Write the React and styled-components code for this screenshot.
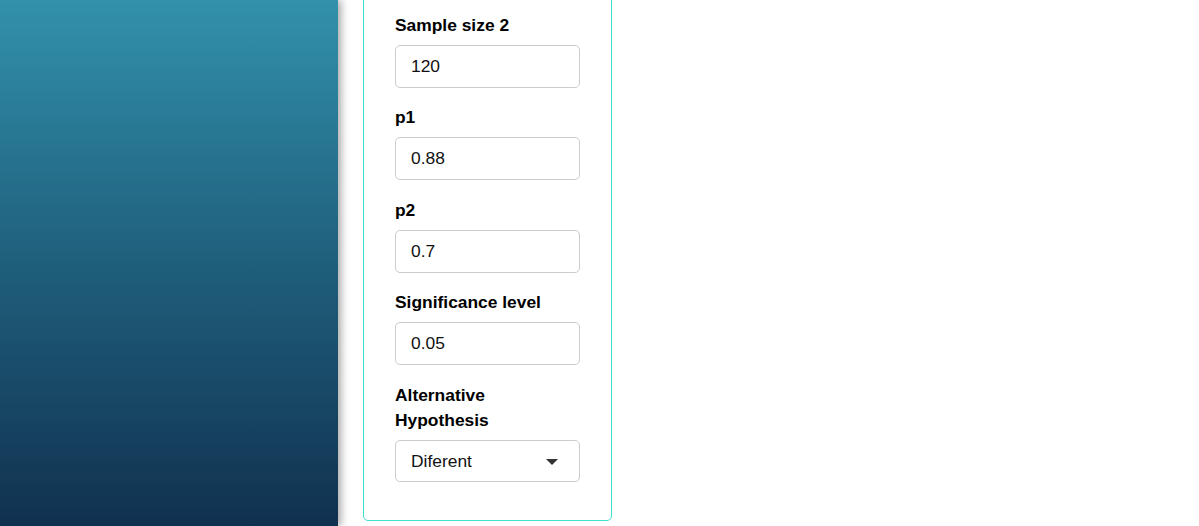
import React, { useState } from "react"
import styled, { createGlobalStyle } from "styled-components"

const GlobalStyle = createGlobalStyle`
  html, body {
    margin: 0;
    padding: 0;
    height: 100%;
    overflow: hidden;
    background: #fff;
    font-family: "Liberation Sans", Arial, sans-serif;
  }
`

const fields = [
  { name: "n2", label: "Sample size 2", value: "120" },
  { name: "p1", label: "p1", value: "0.88" },
  { name: "p2", label: "p2", value: "0.7" },
  { name: "alpha", label: "Significance level", value: "0.05" },
]

const App = () => {
  const [formData, setFormData] = useState(
    Object.fromEntries(fields.map((f) => [f.name, f.value]))
  )
  const [alternative, setAlternative] = useState("two.sided")

  const onChange = (e) => {
    setFormData((prev) => ({ ...prev, [e.target.name]: e.target.value }))
  }

  return (
    <Wrapper>
      <GlobalStyle />
      <Sidebar />
      <Main>
        <Card>
          {fields.map((f) => (
            <Group key={f.name}>
              <Label htmlFor={f.name}>{f.label}</Label>
              <Input
                type="text"
                id={f.name}
                name={f.name}
                value={formData[f.name]}
                onChange={onChange}
              />
            </Group>
          ))}
          <Group>
            <Label htmlFor="alternative">Alternative Hypothesis</Label>
            <SelectBox>
              <Select
                id="alternative"
                value={alternative}
                onChange={(e) => setAlternative(e.target.value)}
              >
                <option value="two.sided">Diferent</option>
                <option value="less">Less</option>
                <option value="greater">Greater</option>
              </Select>
              <Caret />
            </SelectBox>
          </Group>
        </Card>
      </Main>
    </Wrapper>
  )
}

const Wrapper = styled.div`
  display: flex;
  height: 100vh;
`

const Sidebar = styled.aside`
  width: 338px;
  flex-shrink: 0;
  height: 100%;
  background: linear-gradient(to bottom, #3291ac 0%, #1f5f7c 50%, #10314f 100%);
  box-shadow: 3px 0 8px rgba(0, 0, 0, 0.35);
  position: relative;
  z-index: 1;
`

const Main = styled.main`
  padding-left: 25px;
  display: flex;
  align-items: flex-start;
`

const Card = styled.div`
  width: 185px;
  margin-top: -8px;
  padding: 20px 31px 20px 31px;
  border: 1px solid #40e0d0;
  border-radius: 5px;
  background: #fff;
`

const Group = styled.div`
  display: flex;
  flex-direction: column;
  margin-bottom: 17.8px;
`

const Label = styled.label`
  max-width: 165px;
  font-size: 17.4px;
  font-weight: 700;
  line-height: 25px;
  color: #000;
  margin-bottom: 7px;
`

const Input = styled.input`
  box-sizing: border-box;
  width: 185px;
  height: 42.67px;
  padding: 0 15px;
  font-family: "Liberation Sans", Arial, sans-serif;
  font-size: 17.4px;
  color: #111;
  border: 1px solid #ccc;
  border-radius: 5px;
  outline: none;
`

const SelectBox = styled.div`
  position: relative;
  width: 185px;
`

const Select = styled.select`
  box-sizing: border-box;
  width: 100%;
  height: 42.67px;
  padding: 0 15px;
  appearance: none;
  background: #fff;
  font-family: "Liberation Sans", Arial, sans-serif;
  font-size: 17.4px;
  color: #111;
  border: 1px solid #ccc;
  border-radius: 5px;
  outline: none;
`

const Caret = styled.span`
  position: absolute;
  right: 22px;
  top: 19px;
  width: 0;
  height: 0;
  border-left: 6px solid transparent;
  border-right: 6px solid transparent;
  border-top: 6px solid #333;
  pointer-events: none;
`

export default App
